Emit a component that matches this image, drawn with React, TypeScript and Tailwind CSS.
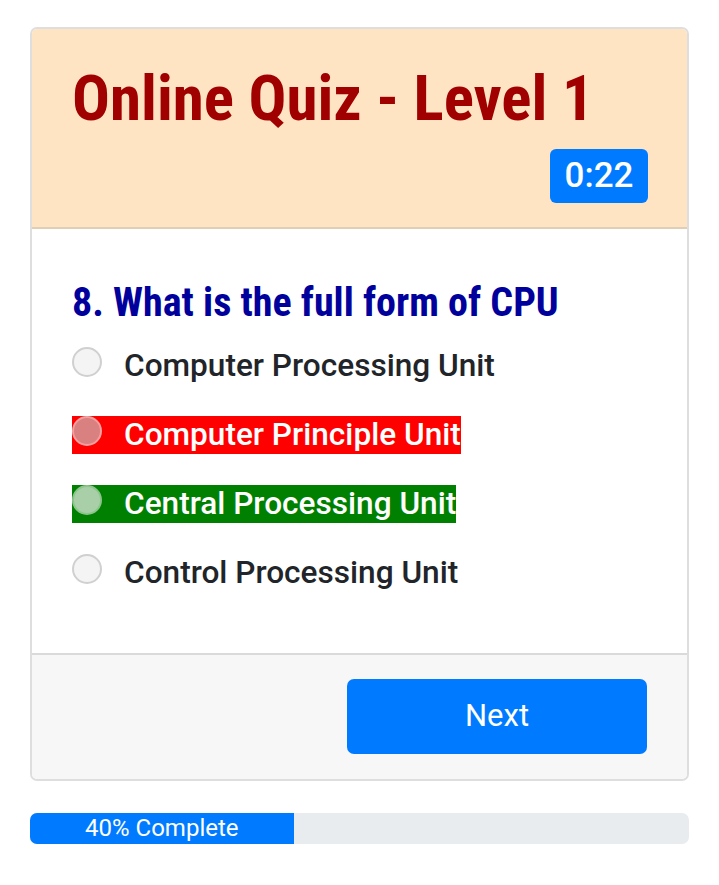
import React from "react";

const cond = { fontFamily: '"Roboto Condensed", Roboto, "Liberation Sans", sans-serif' };

function Radio({ tint }: { tint?: string }) {
  return (
    <span
      className={`inline-block w-[30px] h-[30px] rounded-full border-2 shrink-0 ${
        tint === "red"
          ? "bg-[#d98080] border-[#f4a0a0]"
          : tint === "green"
          ? "bg-[#a8cfa8] border-[#8cc48c]"
          : "bg-[#f4f4f4] border-[#d0d0d0]"
      }`}
    />
  );
}

export default function App() {
  const options = [
    { text: "Computer Processing Unit", tint: "" },
    { text: "Computer Principle Unit", tint: "red" },
    { text: "Central Processing Unit", tint: "green" },
    { text: "Control Processing Unit", tint: "" },
  ];
  return (
    <div className="w-[719px] h-[885px] bg-white pt-[27px] px-[30px]" style={{ fontFamily: 'Roboto, "Liberation Sans", sans-serif' }}>
      <div className="w-[659px] border-2 border-[#dedede] rounded-[7px] overflow-hidden">
        <div className="bg-[#ffe4c4] border-b-2 border-[#e0cfb8] px-[40px] pt-[33px] pb-[24px] flex flex-col">
          <h1 className="text-[63px] leading-[74px] font-bold text-[#a00000] font-stretch-condensed" style={cond}>
            Online Quiz - Level 1
          </h1>
          <div className="self-end mt-[13px] mr-[-1px] bg-[#007bff] text-white rounded-[6px] h-[54px] w-[98px] flex items-center justify-center text-[35px] font-medium">
            0:22
          </div>
        </div>
        <div className="px-[40px] pt-[50px] pb-[61px]">
          <h2 className="text-[40px] leading-[48px] font-bold text-[#00009c] font-stretch-condensed" style={cond}>
            8. What is the full form of CPU
          </h2>
          <div className="mt-[20px] flex flex-col gap-[31px]">
            {options.map((o) => (
              <div key={o.text} className="flex">
                <label
                  className={`flex items-start gap-[22px] h-[38px] ${
                    o.tint === "red" ? "bg-[#ff0000] text-white" : o.tint === "green" ? "bg-[#008000] text-white" : "text-[#212529]"
                  }`}
                >
                  <Radio tint={o.tint} />
                  <span className="text-[31.6px] leading-[37px] font-medium">{o.text}</span>
                </label>
              </div>
            ))}
          </div>
        </div>
        <div className="bg-[#f7f7f7] border-t-2 border-[#dadada] h-[126px] flex items-start justify-end pr-[40px] pt-[24px]">
          <button className="w-[300px] h-[75px] bg-[#007bff] rounded-[7px] text-white text-[31px]">
            Next
          </button>
        </div>
      </div>
      <div className="mt-[32px] w-[659px] h-[31px] bg-[#e9ecef] rounded-[7px] overflow-hidden flex">
        <div className="w-[40%] h-full bg-[#007bff] text-white text-[24px] leading-[31px] text-center">
          40% Complete
        </div>
      </div>
    </div>
  );
}
